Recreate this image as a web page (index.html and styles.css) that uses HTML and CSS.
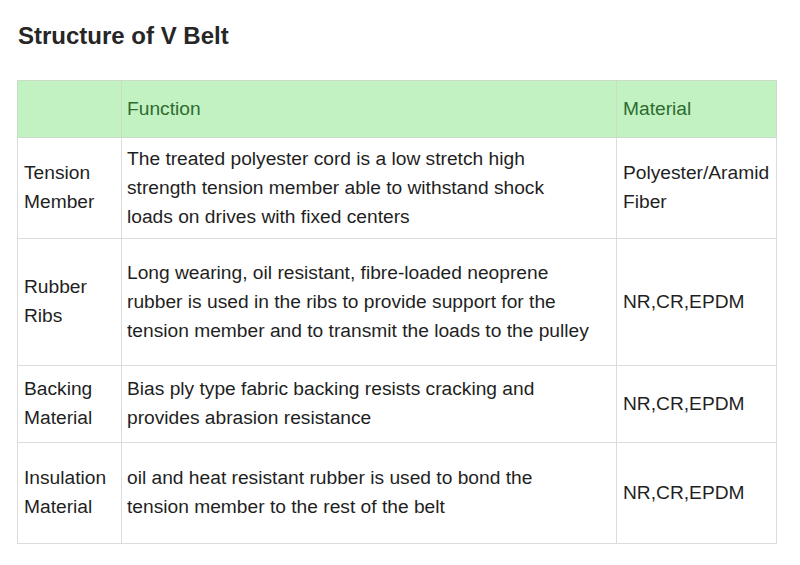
FILE: index.html
```html
<!DOCTYPE html>
<html>
<head>
<meta charset="utf-8">
<link rel="stylesheet" href="styles.css">
</head>
<body>
<div class="page">
  <h1 class="title">Structure of V Belt</h1>
  <table class="spec">
    <colgroup>
      <col class="c1"><col class="c2"><col class="c3">
    </colgroup>
    <tr class="head r0">
      <td></td>
      <td>Function</td>
      <td>Material</td>
    </tr>
    <tr class="r1">
      <td>Tension Member</td>
      <td>The treated polyester cord is a low stretch high strength tension member able to withstand shock loads on drives with fixed centers</td>
      <td>Polyester/Aramid Fiber</td>
    </tr>
    <tr class="r2">
      <td>Rubber Ribs</td>
      <td>Long wearing, oil resistant, fibre-loaded neoprene rubber is used in the ribs to provide support for the tension member and to transmit the loads to the pulley</td>
      <td>NR,CR,EPDM</td>
    </tr>
    <tr class="r3">
      <td>Backing Material</td>
      <td>Bias ply type fabric backing resists cracking and provides abrasion resistance</td>
      <td>NR,CR,EPDM</td>
    </tr>
    <tr class="r4">
      <td>Insulation Material</td>
      <td>oil and heat resistant rubber is used to bond the tension member to the rest of the belt</td>
      <td>NR,CR,EPDM</td>
    </tr>
  </table>
</div>
</body>
</html>
```

FILE: styles.css
```css
html, body {
  margin: 0;
  padding: 0;
  background: #ffffff;
}
.page {
  padding: 22px 0 0 17px;
  font-family: "Liberation Sans", Arial, sans-serif;
  color: #1f1f1f;
}
.title {
  margin: 0 0 30px 1px;
  font-size: 24px;
  line-height: 28px;
  font-weight: bold;
  color: #262626;
}
.spec {
  border-collapse: collapse;
  table-layout: fixed;
  width: 759px;
  font-size: 19.2px;
  line-height: 29px;
}
.c1 { width: 104px; }
.c2 { width: 495px; }
.c3 { width: 160px; }
.spec td {
  border: 1px solid #dcdcdc;
  padding: 0 4px 2px 6px;
  vertical-align: middle;
}
.spec td:nth-child(2) { padding-left: 5px; padding-right: 23px; }
.spec td:nth-child(3) { padding-left: 6px; padding-right: 2px; }
.head td {
  background: #c2f2c2;
  color: #2e6c31;
  border-color: #c8dcc8;
}
.r0 { height: 57px; }
.r1 { height: 101px; }
.r2 { height: 127px; }
.r3 { height: 77px; }
.r4 { height: 101px; }
```
